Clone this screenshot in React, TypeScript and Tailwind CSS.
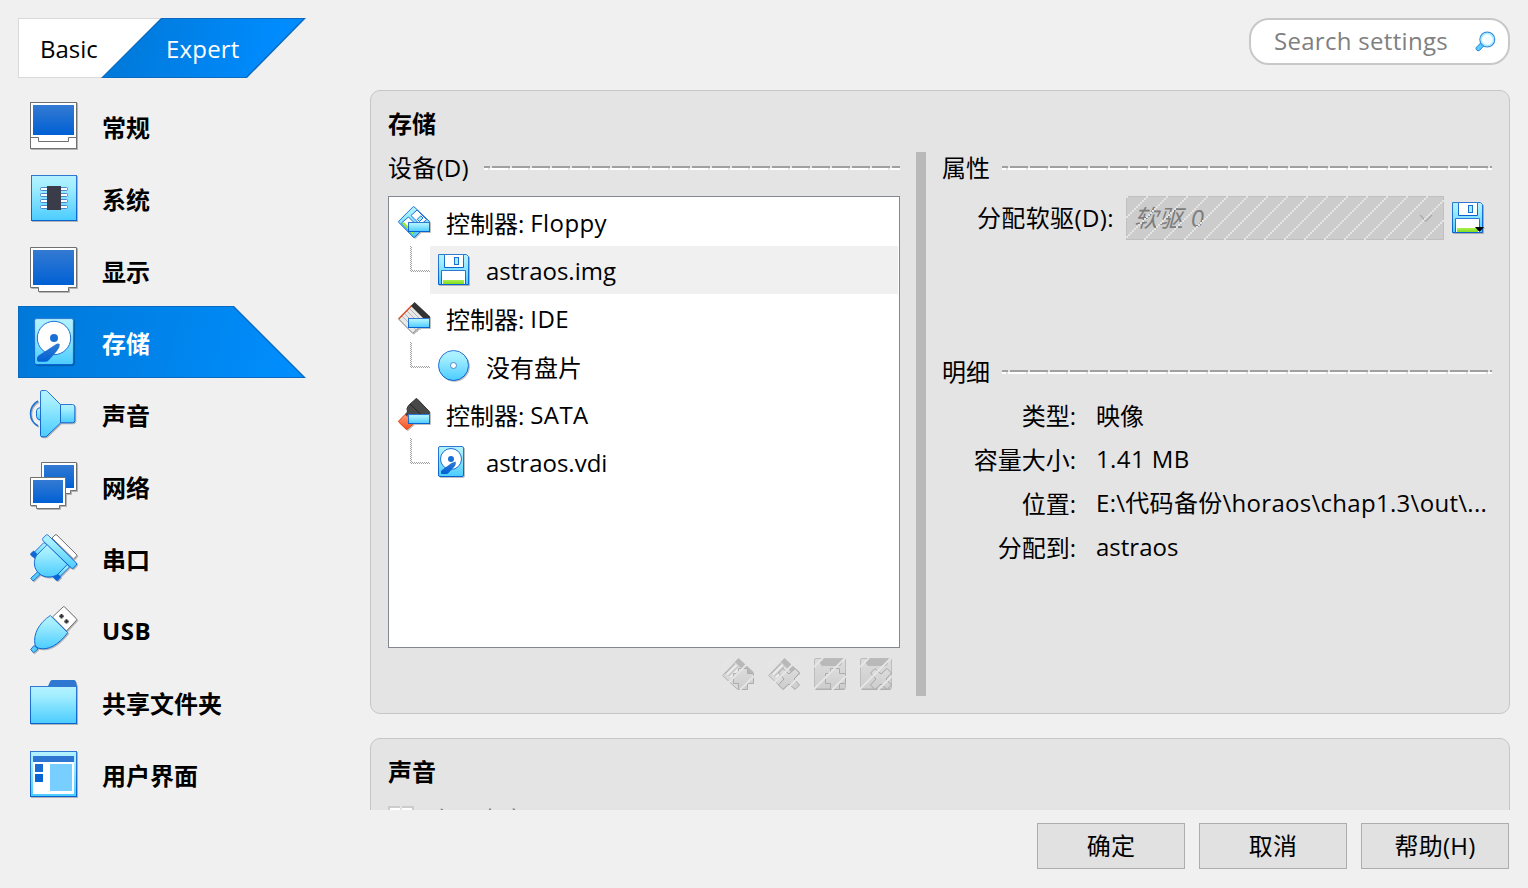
import type { ReactNode } from "react";

const BLUE = "#1a6fd4";

function Defs() {
  return (
    <svg className="absolute h-0 w-0" aria-hidden="true">
      <defs>
        <linearGradient id="aqua" x1="0" y1="0" x2="0" y2="1">
          <stop offset="0" stopColor="#b4f2ff" />
          <stop offset="0.25" stopColor="#a2eeff" />
          <stop offset="1" stopColor="#4bccff" />
        </linearGradient>
        <linearGradient id="screen" x1="0" y1="0" x2="0" y2="1">
          <stop offset="0" stopColor="#347ad2" />
          <stop offset="1" stopColor="#0060d4" />
        </linearGradient>
        <linearGradient id="edge" x1="0" y1="0" x2="0" y2="1">
          <stop offset="0" stopColor="#2f78d2" />
          <stop offset="1" stopColor="#0862d2" />
        </linearGradient>
        <linearGradient id="green" x1="0" y1="0" x2="0" y2="1">
          <stop offset="0" stopColor="#a9ef4e" />
          <stop offset="1" stopColor="#7fdd1c" />
        </linearGradient>
        <linearGradient id="grey" x1="0" y1="0" x2="0" y2="1">
          <stop offset="0" stopColor="#dcdcdc" />
          <stop offset="1" stopColor="#cdcdcd" />
        </linearGradient>
        <linearGradient id="red" x1="0" y1="0" x2="0" y2="1">
          <stop offset="0" stopColor="#ff9a72" />
          <stop offset="1" stopColor="#f4501e" />
        </linearGradient>
        <pattern id="hatch" width="20" height="20" patternUnits="userSpaceOnUse">
          {[0, 1, 2, 3, 4, 5, 6, 7, 8, 9].map((k) => (
            <rect key={k} x={2 * k} y={(20 - 2 * k) % 20} width="2" height="2" fill="#e4e4e4" shapeRendering="crispEdges" />
          ))}
        </pattern>
      </defs>
    </svg>
  );
}

function Icon({ size = 48, children }: { size?: number; children: ReactNode }) {
  return (
    <svg
      width={size}
      height={size}
      viewBox={`0 0 ${size} ${size}`}
      fill="none"
      className="shrink-0 overflow-visible drop-shadow-[1px_1px_0px_rgba(0,0,0,0.25)]"
    >
      {children}
    </svg>
  );
}

const GeneralIcon = () => (
  <Icon>
    <rect x="0.5" y="0.5" width="46" height="46" fill="#fff" stroke="#707070" />
    <rect x="3" y="3" width="41" height="30" fill="url(#screen)" />
    <path d="M0.5 35.5H8.5V39.5H38.5V35.5H46.5" stroke="#707070" />
  </Icon>
);

const SystemIcon = () => (
  <Icon>
    <rect x="1.5" y="1.5" width="45" height="45" fill="url(#aqua)" stroke="url(#edge)" />
    {[13.5, 19.5, 25.5, 31.5].map((y) => (
      <rect key={y} x="10.5" y={y} width="27" height="3" rx="1" fill="#fff" stroke="#4a86c8" />
    ))}
    <rect x="17" y="12" width="14" height="24" fill="#3a3d49" />
  </Icon>
);

const DisplayIcon = () => (
  <Icon>
    <path d="M0.5 1.5H46.5V41.5H38.5V45.5H8.5V41.5H0.5Z" fill="#fff" stroke="#707070" />
    <rect x="3" y="4" width="41" height="35" fill="url(#screen)" />
  </Icon>
);

const StorageIcon = () => (
  <Icon>
    <rect x="4.6" y="0.6" width="38.8" height="46" rx="2" fill="url(#aqua)" stroke="url(#edge)" />
    <circle cx="24" cy="20" r="16.7" fill="#fff" stroke={BLUE} />
    <circle cx="24" cy="20" r="4" fill={BLUE} />
    <path d="M29.7 26C30 28 29 30.5 26.5 33.5L19.5 41.5Q17.8 43.8 15.5 43.8H8.8Q7 43.8 7 42V40.3Q7 38.6 8.6 37.6L25.5 26.6Q27.5 25 29.7 26Z" fill="url(#screen)" />
  </Icon>
);

const SoundIcon = () => (
  <Icon>
    <path d="M10.5 17.5Q6.5 18 6.5 21V26.5Q6.5 29.5 10.5 30Z" fill="url(#aqua)" stroke={BLUE} />
    <path d="M8 11C-2 17-2 30.5 8 36" stroke={BLUE} strokeWidth="1.5" />
    <path d="M30.5 14.5H42.5Q44.8 14.5 44.8 17V30.5Q44.8 32.8 42.5 32.8H30.5Z" fill="url(#aqua)" stroke="url(#edge)" />
    <path d="M12 0.5H15.5Q16.5 0.5 17.3 1.3L30.5 14.5V33L17 46Q16.2 46.8 15 46.8H12Q10.5 46.8 10.5 45.3V2Q10.5 0.5 12 0.5Z" fill="url(#aqua)" stroke="url(#edge)" />
  </Icon>
);

const NetworkIcon = () => (
  <Icon>
    <path d="M11.5 0.5H46.5V28.5H40.5V31.5H17.5V28.5H11.5Z" fill="#fff" stroke="#707070" />
    <rect x="14" y="3" width="30" height="23" fill="url(#screen)" />
    <path d="M0.5 15.5H35.5V43.5H29.5V46.5H6.5V43.5H0.5Z" fill="#fff" stroke="#707070" />
    <rect x="3" y="18" width="30" height="23" fill="url(#screen)" />
  </Icon>
);

const SerialIcon = () => (
  <Icon>
    <path d="M22 4L25 1Q26 0.2 27 1.2L46.3 20.3Q47.3 21.3 46.3 22.3L43.5 25Z" fill="#fff" stroke="#707070" />
    <path d="M14 8.5L3 19.5L7 23.5L18.5 12Z" fill="url(#aqua)" stroke={BLUE} />
    <path d="M35.5 28.5L24.5 40L28.5 44L39.5 33Z" fill="url(#aqua)" stroke={BLUE} />
    <path d="M3.7 16.4L8.2 20.9L4.6 24.4L0.3 21V19.6Z" fill="#1268d4" />
    <path d="M26.4 38.6L31.2 43L27.8 46.8H26.2L22.6 43Z" fill="#0866dc" />
    <path d="M8 37.5L10.5 40L3.2 47L0.7 44.3Z" fill="#58ccf8" stroke={BLUE} />
    <path d="M17.2 10.5L6.5 21.5C2.8 27.5 4.3 35 8.4 38.8C12.5 43.2 20 44.5 27 41L37.3 30.5Z" fill="url(#aqua)" stroke="url(#edge)" />
    <path d="M12.6 4.5L16.2 1Q17.2 0.3 18.2 1.3L46.4 29Q47 30 46.4 31L43.2 34.2Q42.3 34.8 41.4 34L12.8 6.5Q12.2 5.4 12.6 4.5Z" fill="url(#aqua)" stroke="url(#edge)" />
  </Icon>
);

const UsbIcon = () => (
  <Icon>
    <path d="M22.5 11L33 1Q33.8 0.2 34.6 1L46.3 12.7Q47 13.5 46.3 14.3L36.5 25Z" fill="#fff" stroke="#707070" />
    <path d="M30.5 8h2v1.2h1.2v2h-1.2v1.2h-2v-1.2h-1.2v-2h1.2zM35.5 13.2h2v1.2h1.2v2h-1.2v1.2h-2v-1.2h-1.2v-2h1.2z" fill="#333" />
    <path d="M4 39.5L8 43L3.5 46.8L0.7 43.5Z" fill="#58ccf8" stroke={BLUE} />
    <path d="M20.3 9.5L37.7 26.7C29 38.5 18 45 8.5 42.2Q5.5 41.5 5 38.5C3 28 9 17 20.3 9.5Z" fill="url(#aqua)" stroke="url(#edge)" />
  </Icon>
);

const FolderIcon = () => (
  <Icon>
    <path d="M18 8L20.3 3.2Q21 2 22.3 2H43.8Q45.2 2 45.6 3.2L47 8V9H18Z" fill="#2f78d2" />
    <rect x="0.5" y="8.5" width="46" height="37" fill="url(#aqua)" stroke="url(#edge)" />
  </Icon>
);

const InterfaceIcon = () => (
  <Icon>
    <rect x="0.5" y="1.5" width="46" height="45" fill="url(#aqua)" stroke="url(#edge)" />
    <rect x="3" y="12" width="41" height="32" fill="#fff" />
    <rect x="3" y="6" width="41" height="6" fill="#2d76d2" />
    <rect x="5" y="14" width="8" height="8" fill="#1a6cd2" />
    <rect x="5" y="24" width="8" height="8" fill="#0864d4" />
    <rect x="20" y="14" width="22" height="27" fill="#78cfff" />
  </Icon>
);

const FloppyGlyph = () => (
  <>
    <path d="M0.5 0.5H28.5L30.5 2.5V30.5H0.5Z" fill="url(#aqua)" stroke="url(#edge)" />
    <path d="M6.5 0.5V13.5H25.5V0.5Z" fill="#fff" stroke="url(#edge)" />
    <rect x="16.5" y="3.5" width="4" height="7" fill="#a2eeff" stroke="#1a6fd4" />
    <path d="M3.5 30.5V16.5H27.5V30.5Z" fill="#fff" stroke="url(#edge)" />
    <rect x="5" y="26" width="21" height="4" fill="url(#green)" />
  </>
);

const FloppyIcon = () => (
  <Icon size={32}>
    <FloppyGlyph />
  </Icon>
);

const DropFloppyIcon = () => (
  <Icon size={32}>
    <FloppyGlyph />
    <path d="M23 25H32L28.5 29H26.5Z" fill="#000" />
  </Icon>
);

const Tray = () => <rect x="10.5" y="16.5" width="21" height="9" fill="url(#aqua)" stroke="url(#edge)" />;

const FloppyControllerIcon = () => (
  <Icon size={32}>
    <path d="M16 0.7L31.3 15.3V16.5L16.5 31.3H15.5L0.7 16.2V15.2L15.2 0.7Z" fill="url(#aqua)" stroke="url(#edge)" />
    <path d="M19 4L28.5 13.5L22.5 19L13 9.5Z" fill="#fff" stroke={BLUE} />
    <path d="M22.8 9.8L25 12L21.5 15.5L19.3 13.3Z" fill="#a2eeff" stroke={BLUE} />
    <path d="M3.5 17L10.5 11L21 21.5L14.5 28Z" fill="#fff" stroke={BLUE} />
    <path d="M4 17.5L5.8 16L16.5 26.5L14.5 28.5Z" fill="#98e838" />
    <Tray />
  </Icon>
);

const IdeIcon = () => (
  <Icon size={32}>
    <path d="M16 1.5L31 16.5L14.8 31.3L0.6 17Z" fill="#e8e8e8" stroke="#888" />
    <path d="M11.5 6.5L28 23M9 9L25 25M6.5 11.5L22 27M4 14L19 29" stroke="#b4b4b4" />
    <path d="M0.6 17L14 3.2" stroke="#e0522e" strokeWidth="1.4" />
    <path d="M16.5 0L32 14.5V17H26L13 4Z" fill="#333" />
    <Tray />
  </Icon>
);

const SataIcon = () => (
  <Icon size={32}>
    <path d="M0.7 23L7 16.5L17.5 24L9.2 31.3H8.2L0.7 24Z" fill="url(#red)" stroke="#d8481c" />
    <path d="M9 10.5L10.5 7.5L18 0.7H19L31.3 13.5V17H8V15.5L9.5 14Z" fill="#484848" stroke="#333" />
    <path d="M12 6L23.5 17" stroke="#242424" />
    <Tray />
  </Icon>
);

const DiscIcon = () => (
  <Icon size={32}>
    <circle cx="15.5" cy="15.5" r="15" fill="url(#aqua)" stroke="url(#edge)" />
    <circle cx="15.5" cy="15.5" r="3" fill="#fff" stroke="#4a86c8" />
  </Icon>
);

const DriveIcon = () => (
  <Icon size={32}>
    <rect x="0.5" y="0.5" width="25" height="30" rx="1.5" fill="url(#aqua)" stroke="url(#edge)" />
    <circle cx="13" cy="13" r="10.5" fill="#fff" stroke={BLUE} />
    <circle cx="13" cy="13" r="3" fill={BLUE} />
    <path d="M17.6 15.4Q18.6 19 15.5 21.5L11 26.5Q9.8 28 8 28H4Q3 28 3 27V25.5Q3 24.5 4 24L13.5 17Z" fill="url(#screen)" />
  </Icon>
);

const SearchIcon = () => (
  <svg width="21" height="21" viewBox="0 0 21 21" fill="none" className="shrink-0">
    <path d="M6.2 11.5L9 14.7L4.5 19.4Q3 20.4 1.6 19Q0.4 17.6 1.4 16.3Z" fill="#58ccff" stroke="#2a86dc" />
    <circle cx="12.3" cy="8.5" r="7.4" fill="#f4fdff" stroke="#3f8fdd" strokeWidth="1.3" />
    <circle cx="12.3" cy="8.5" r="6.1" stroke="#a0eaff" strokeWidth="1.3" />
  </svg>
);

const PLUS = "M16.5 10.5H25.5V15.5H31.5V25.5H25.5V31.5H16.5V25.5H11.5V15.5H16.5Z";
const CROSS = "M15 10.5L21 16L27 10.5L31.5 15L26 21L31.5 27L27 31.5L21 26L15 31.5L10.5 27L16 21L10.5 15Z";

function DisabledIcon({ shape, mark }: { shape: "diamond" | "square"; mark: "plus" | "cross" }) {
  return (
    <svg width="32" height="32" viewBox="0 0 32 32" fill="none" className="shrink-0">
      {shape === "diamond" ? (
        <>
          <path d="M16 1.5L30.5 16.5L15.5 31.3L0.6 17.5Z" fill="#d9d9d9" stroke="#b2b2b2" />
          <path d="M5 16.5L14.5 7M8 19.5L17 10.5" stroke="#efefef" strokeWidth="1.6" />
          <path d="M3 16L13 6M6.5 18L16 8.5M9 21L14 16" stroke="#bdbdbd" />
          <path d="M16.5 0L31.5 14V17H26L13 4Z" fill="#b8b8b8" />
        </>
      ) : (
        <>
          <rect x="0.5" y="0.5" width="31" height="30.5" rx="1.5" fill="url(#grey)" stroke="#bcbcbc" />
          <path d="M6 1H28V5.5L26 8H8L6 5.5Z" fill="#b9b9b9" />
          <path d="M1.5 31.3H30.5" stroke="#a8a8a8" />
        </>
      )}
      {mark === "plus" ? (
        <path d={PLUS} fill="url(#grey)" stroke="#acacac" />
      ) : (
        <path d={CROSS} fill="url(#grey)" stroke="#a6a6a6" />
      )}
      <path d="M0 9L9 0M0 31L31 0M18 32L32 18" stroke="#e6e6e6" strokeWidth="1.8" />
    </svg>
  );
}

const categories = [
  { label: "常规", icon: <GeneralIcon /> },
  { label: "系统", icon: <SystemIcon /> },
  { label: "显示", icon: <DisplayIcon /> },
  { label: "存储", icon: <StorageIcon />, active: true },
  { label: "声音", icon: <SoundIcon /> },
  { label: "网络", icon: <NetworkIcon /> },
  { label: "串口", icon: <SerialIcon /> },
  { label: "USB", icon: <UsbIcon />, latin: true },
  { label: "共享文件夹", icon: <FolderIcon /> },
  { label: "用户界面", icon: <InterfaceIcon /> },
];

const controllers = [
  { name: "Floppy", icon: <FloppyControllerIcon />, child: { label: "astraos.img", icon: <FloppyIcon />, selected: true, latin: true } },
  { name: "IDE", icon: <IdeIcon />, child: { label: "没有盘片", icon: <DiscIcon />, selected: false, latin: false } },
  { name: "SATA", icon: <SataIcon />, child: { label: "astraos.vdi", icon: <DriveIcon />, selected: false, latin: true } },
];

const details = [
  { term: "类型:", value: "映像", style: "" },
  { term: "容量大小:", value: "1.41 MB", style: "pb-0.5 tracking-[0.4px]" },
  { term: "位置:", value: "E:\\代码备份\\horaos\\chap1.3\\out\\...", style: "pb-0.5 tracking-[0.29px]" },
  { term: "分配到:", value: "astraos", style: "pb-0.5" },
];

function Header({ title, wide }: { title: string; wide?: boolean }) {
  return (
    <div className="flex h-8 items-center justify-between">
      <span className={wide ? "" : "tracking-[0.25px]"}>{title}</span>
      <div className={wide ? "w-[490px]" : "w-[416px]"}>
        <div className="h-0.5 bg-[repeating-linear-gradient(90deg,#a0a0a0_0_6px,#e4e4e4_6px_8px,#a0a0a0_8px_20px)]" />
        <div className="h-0.5 bg-[repeating-linear-gradient(90deg,#fff_0_4px,#e4e4e4_4px_6px,#fff_6px_20px)]" />
      </div>
    </div>
  );
}

function Tabs() {
  return (
    <div className="relative h-[60px] w-[288px]">
      <div className="h-[60px] w-[144px] border border-[#d9d9d9] bg-white [clip-path:polygon(0_0,143px_0,84px_100%,0_100%)]">
        <span className="block pl-[21px] leading-[59px]">Basic</span>
      </div>
      <div className="absolute inset-y-0 left-[83px] w-[205px] bg-[#0a69c0] [clip-path:polygon(60px_0,100%_0,146px_100%,0_100%)]">
        <div className="h-full bg-linear-[105deg,#0078d7_5%,#008cff_85%] text-white [clip-path:polygon(61px_1px,202px_1px,145px_59px,2px_59px)]">
          <span className="block pl-[65px] leading-[61px] tracking-[0.2px]">Expert</span>
        </div>
      </div>
    </div>
  );
}

function Category({ label, icon, active, latin }: { label: string; icon: ReactNode; active?: boolean; latin?: boolean }) {
  const row = (
    <div className="flex h-[72px] items-center gap-6 pl-3">
      {icon}
      <span className={latin ? "pt-0.5 tracking-[0.6px]" : "pt-1"}>{label}</span>
    </div>
  );
  if (!active) return <li>{row}</li>;
  return (
    <li className="w-[288px] bg-[#0a69c0] text-white [clip-path:polygon(0_0,216px_0,100%_100%,0_100%)]">
      <div className="bg-linear-[105deg,#0078d7_0%,#008fff_100%] [clip-path:polygon(1px_1px,215px_1px,285px_71px,1px_71px)]">{row}</div>
    </li>
  );
}

function Branch() {
  return (
    <svg width="20" height="26" viewBox="0 0 20 26" className="mb-[22px] shrink-0" shapeRendering="crispEdges">
      <path d="M0.5 0V26M1 25.5H20" fill="none" stroke="#a0a0a0" strokeDasharray="1 1" />
      <path d="M1.5 1V25M2 24.5H20" fill="none" stroke="#a0a0a0" strokeDasharray="1 1" />
    </svg>
  );
}

export default function App() {
  return (
    <div className="flex h-[888px] w-[1528px] flex-col overflow-hidden bg-[#f0f0f0] font-['Open_Sans','Noto_Sans_CJK_SC',sans-serif] text-[24px] leading-8 text-black">
      <Defs />
      <header className="flex h-[90px] shrink-0 justify-between px-[18px] pt-[18px]">
        <Tabs />
        <div className="flex h-[47px] w-[261px] items-center justify-between rounded-[20px] border-2 border-[#c8c8c8] bg-white pr-3 pl-[23px] text-[#808080]">
          <span className="pb-0.5 tracking-[0.3px]">Search settings</span>
          <SearchIcon />
        </div>
      </header>

      <main className="flex h-[720px] shrink-0 px-[18px]">
        <ul className="w-[352px] shrink-0 font-bold">
          {categories.map((c) => (
            <Category key={c.label} {...c} />
          ))}
        </ul>

        <div className="flex h-full grow flex-col gap-6 overflow-hidden">
          <section className="flex h-[624px] shrink-0 flex-col rounded-[10px] border border-[#c6c6c6] bg-[#e4e4e4] px-[17px] pt-[17px]">
            <h2 className="leading-8 font-bold">存储</h2>
            <div className="mt-3 flex h-[544px]">
              <div className="flex w-[512px] flex-col">
                <Header title="设备(D)" />
                <div className="mt-3 h-[452px] border border-[#828790] bg-white px-px pt-px">
                  {controllers.map((c) => (
                    <div key={c.name}>
                      <div className="flex h-12 items-center gap-4 pl-2">
                        {c.icon}
                        <div className="flex gap-1.5 pt-1">
                          <span>控制器:</span>
                          <span className="-mt-px tracking-[0.4px]">{c.name}</span>
                        </div>
                      </div>
                      <div className="flex h-12 items-center pl-5">
                        <Branch />
                        <div className={`flex h-12 grow items-center gap-4 pl-2 ${c.child.selected ? "bg-[#f0f0f0]" : ""}`}>
                          {c.child.icon}
                          <span className={c.child.latin ? "pt-0.5" : "pt-1"}>{c.child.label}</span>
                        </div>
                      </div>
                    </div>
                  ))}
                </div>
                <div className="mt-2.5 flex justify-end gap-3.5 pr-2">
                  <DisabledIcon shape="diamond" mark="plus" />
                  <DisabledIcon shape="diamond" mark="cross" />
                  <DisabledIcon shape="square" mark="plus" />
                  <DisabledIcon shape="square" mark="cross" />
                </div>
              </div>

              <div className="mx-4 w-2.5 shrink-0 bg-[#b9b9b9]" />

              <div className="flex w-[550px] flex-col">
                <Header title="属性" wide />
                <div className="mt-3 flex h-11 items-center">
                  <span className="w-[172px] text-right tracking-[0.4px]">分配软驱(D):</span>
                  <div className="relative ml-3 flex h-11 w-[318px] items-center justify-between border border-[#c0c0c0] bg-[#cccccc] pr-2.5 pl-[7px] text-[#7d7d7d] italic">
                    <span className="tracking-[0.8px]">软驱 0</span>
                    <svg width="14" height="9" viewBox="0 0 14 9" fill="none">
                      <path d="M1 1L7 7L13 1" stroke="#aaa" strokeWidth="1.3" />
                    </svg>
                    <svg className="absolute -top-px -left-px" width="318" height="44">
                      <rect width="318" height="44" fill="url(#hatch)" />
                    </svg>
                  </div>
                  <div className="ml-2">
                    <DropFloppyIcon />
                  </div>
                </div>
                <div className="mt-[116px]">
                  <Header title="明细" wide />
                </div>
                <dl className="mt-1.5">
                  {details.map((d) => (
                    <div key={d.term} className="flex h-11 items-center gap-5">
                      <dt className="w-[134px] shrink-0 text-right">{d.term}</dt>
                      <dd className={`whitespace-nowrap ${d.style}`}>{d.value}</dd>
                    </div>
                  ))}
                </dl>
              </div>
            </div>
          </section>

          <section className="h-[240px] shrink-0 rounded-[10px] border border-[#c6c6c6] bg-[#e4e4e4] px-[17px] pt-[17px]">
            <h2 className="leading-8 font-bold">声音</h2>
            <div className="mt-[18px] flex gap-4 text-[#808080]">
              <div className="flex h-[26px] w-[26px] border-2 border-[#cccccc] bg-white pl-[10px]">
                <div className="-mt-0.5 h-[26px] w-0.5 bg-[#e4e4e4]" />
              </div>
              <span className="-mt-0.5">启用声音</span>
            </div>
          </section>
        </div>
      </main>

      <footer className="flex justify-end gap-3.5 pt-[13px] pr-[19px]">
        {["确定", "取消", "帮助(H)"].map((label) => (
          <button key={label} className="h-[46px] w-[148px] border border-[#adadad] bg-[#e1e1e1] tracking-[0.2px]">
            {label}
          </button>
        ))}
      </footer>
    </div>
  );
}
